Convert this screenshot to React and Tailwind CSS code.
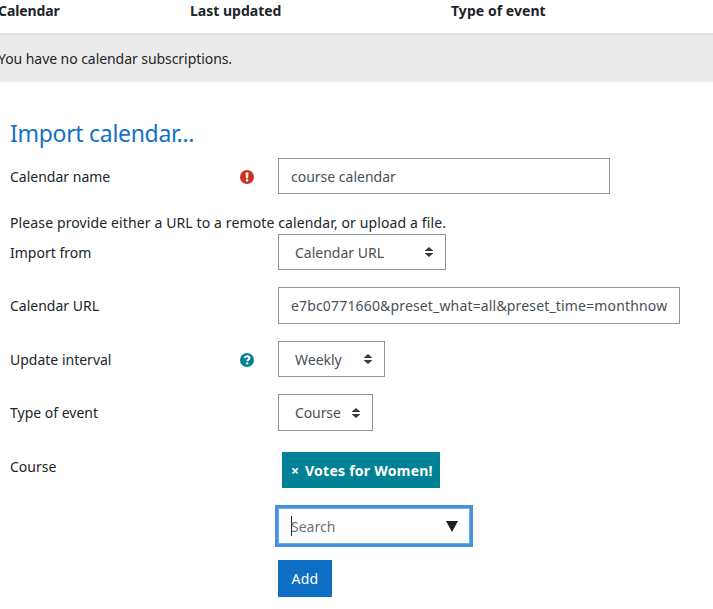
import React from 'react';

function RequiredIcon() {
  return (
    <svg width="14" height="14" viewBox="0 0 14 14" className="shrink-0">
      <circle cx="7" cy="7" r="7" fill="#ca3120" />
      <path d="M5.6 2.4h2.8L8.1 8.2H5.9zM5.8 9.3h2.4v2.2H5.8z" fill="#fff" />
    </svg>
  );
}

function HelpIcon() {
  return (
    <svg width="14" height="14" viewBox="0 0 14 14" className="shrink-0">
      <circle cx="7" cy="7" r="7" fill="#008196" />
      <path d="M4.6 5.1C4.9 3.9 5.7 3.3 7 3.3c1.4 0 2.4.7 2.4 1.8 0 1.5-2.2 1.5-2.2 3.2" fill="none" stroke="#fff" strokeWidth="2" />
      <path d="M6.1 9.4h2.2v2H6.1z" fill="#fff" />
    </svg>
  );
}

function FormRow({ label, icon, className, children }) {
  return (
    <div className={`flex items-start ${className}`}>
      <div className="flex w-[268px] shrink-0 items-center justify-between pt-2 pr-6">
        <span>{label}</span>
        {icon}
      </div>
      {children}
    </div>
  );
}

function TextInput({ value, className }) {
  return (
    <input
      type="text"
      defaultValue={value}
      className={`border border-[#8f959e] bg-white px-3 text-[#495057] outline-none ${className}`}
    />
  );
}

function Select({ value, className }) {
  return (
    <button type="button" className={`flex items-center justify-between border border-[#8f959e] bg-white pr-3 pl-4 text-[#495057] ${className}`}>
      <span className="pt-px">{value}</span>
      <svg width="8" height="10" viewBox="0 0 8 10" fill="#343a40">
        <path d="M4 0L0 3.6V4h8v-.4zM4 10L0 6.4V6h8v.4z" />
      </svg>
    </button>
  );
}

function App() {
  return (
    <div className="h-[609px] w-[713px] overflow-hidden bg-white font-['Noto_Sans',sans-serif] text-[14px] leading-[22px] text-[#212529]">
      {/* Subscriptions table */}
      <div className="flex h-[35px] border-b-2 border-[#dee2e6] font-bold">
        <div className="-ml-0.5 w-[192px] shrink-0 tracking-[-0.1px]">Calendar</div>
        <div className="w-[261px] shrink-0">Last updated</div>
        <div className="tracking-[0.05px]">Type of event</div>
      </div>
      <div className="-ml-0.5 h-[47px] bg-[#ebebeb] pt-[13px] tracking-[-0.06px]">You have no calendar subscriptions.</div>

      {/* Import form */}
      <div className="px-[10px] pt-[36px]">
        <h3 className="h-10 text-[23px] leading-[31px] tracking-[-0.3px] text-[#1271c6]">Import calendar...</h3>
        <FormRow label="Calendar name" className="h-[54px]" icon={<RequiredIcon />}>
          <TextInput value="course calendar" className="h-9 w-[332px]" />
        </FormRow>
        <p className="h-[22px] tracking-[0.12px]">Please provide either a URL to a remote calendar, or upload a file.</p>
        <FormRow label="Import from" className="h-[53px]">
          <Select value="Calendar URL" className="h-9 w-[168px]" />
        </FormRow>
        <FormRow label="Calendar URL" className="h-[54px]">
          <TextInput
            value="e7bc0771660&preset_what=all&preset_time=monthnow"
            className="h-[37px] w-[402px] tracking-[0.16px]"
          />
        </FormRow>
        <FormRow label="Update interval" className="h-[53px]" icon={<HelpIcon />}>
          <Select value="Weekly" className="h-9 w-[107px]" />
        </FormRow>
        <FormRow label="Type of event" className="h-[54px]">
          <Select value="Course" className="h-[37px] w-[95px] tracking-[-0.1px]" />
        </FormRow>
        <FormRow label="Course">
          <div className="flex flex-col items-start pt-1">
            <div className="ml-1 flex h-9 w-[158px] items-center gap-1.5 bg-[#008196] pt-0.5 pl-[9px] font-bold text-white">
              <span>×</span>
              <span className="tracking-[0.25px]">Votes for Women!</span>
            </div>
            <div className="mt-[20px] flex h-9 w-[192px] items-center border border-[#66afe9] bg-white pr-[11px] pl-3 text-[#6a737b] ring-3 ring-[#4a90d9]">
              <span className="-mr-px h-5 w-px bg-[#212529]" />
              <span className="flex-1 pt-px">Search</span>
              <svg width="12" height="11" viewBox="0 0 12 11" fill="#1d2125">
                <path d="M0 0h12L6 11z" />
              </svg>
            </div>
            <button type="button" className="mt-4 h-[37px] w-[54px] bg-[#0f6fc5] tracking-[0.3px] text-white">Add</button>
          </div>
        </FormRow>
      </div>
    </div>
  );
}

export default App;
